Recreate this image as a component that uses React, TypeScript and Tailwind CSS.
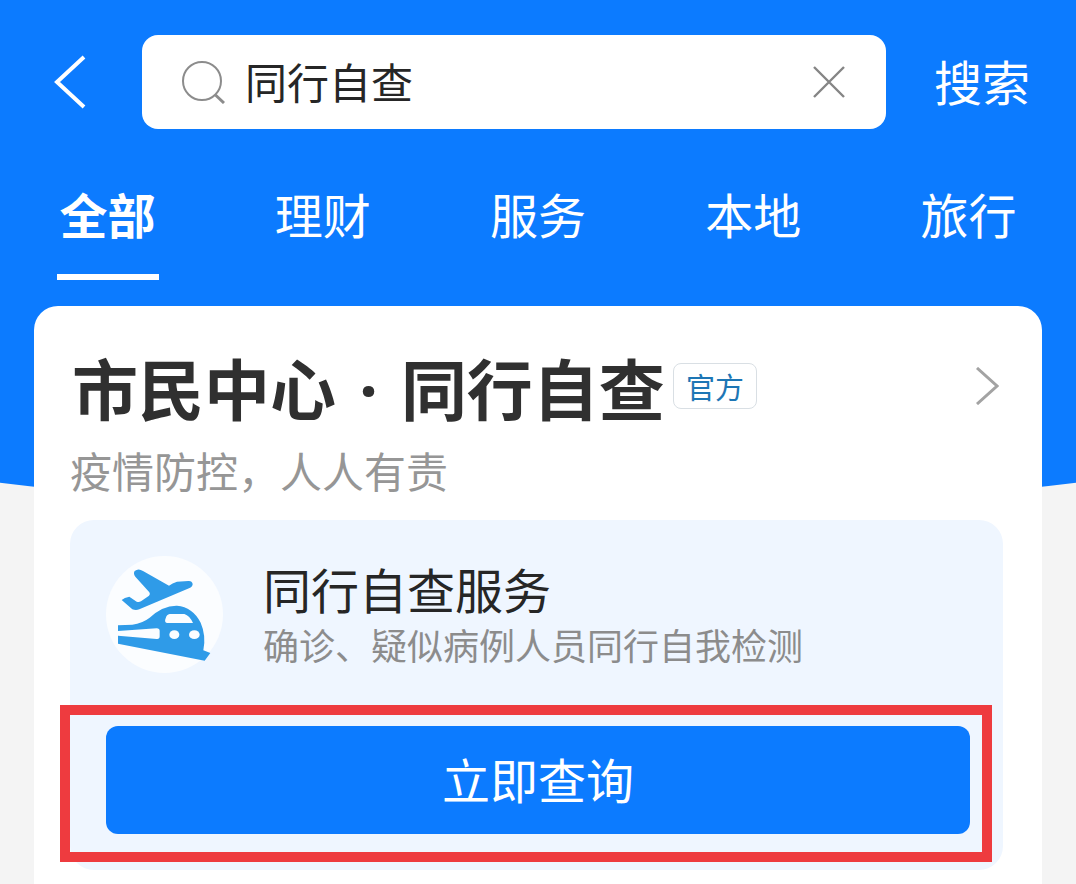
import React, { useState } from "react";

const tabs = ["全部", "理财", "服务", "本地", "旅行"];

const BackIcon = () => (
  <svg width="32" height="54" viewBox="0 0 32 54" fill="none" stroke="currentColor" strokeWidth="4">
    <path d="M30 2 L3 27 L30 52" />
  </svg>
);

const SearchIcon = () => (
  <svg width="44" height="44" viewBox="0 0 44 44" fill="none" stroke="#8c8c8c" strokeWidth="2">
    <circle cx="21" cy="21" r="19" />
    <path d="M34.5 35 L43 43" strokeWidth="3" />
  </svg>
);

const ClearIcon = () => (
  <svg width="32" height="32" viewBox="0 0 32 32" fill="none" stroke="#858585" strokeWidth="2.4">
    <path d="M1 1 L31 31 M31 1 L1 31" />
  </svg>
);

const ChevronIcon = () => (
  <svg width="24" height="38" viewBox="0 0 24 38" fill="none" stroke="#a3a3a3" strokeWidth="3">
    <path d="M2 1 L22 19 L2 37" />
  </svg>
);

const TravelIcon = () => (
  <svg className="size-full" viewBox="51 15 351 351" fill="#2f9be8">
    {/* Plane */}
    <path d="M311 99 Q309 89 298 90 L264 92 Q250 97 240 104 L162 60 Q148 51 137 60 Q132 68 139 77 L181 124 Q185 130 180 134 L156 151 Q149 155 143 152 L121 137 Q106 139 98 147 L130 175 Q141 179 151 175 L300 112 Q311 107 311 99 Z" />
    {/* Train */}
    <path d="M87 223 L130 221 Q160 217 182 200 Q222 163 264 164 Q311 168 335 215 Q352 254 343 298 L364 306 L347 329 L87 278 Z" />
    <g fill="#fbfdff">
      <path d="M87 240 L203 232 Q212 232 212 240 V256 Q212 265 203 264 L87 254 Z" />
      <path d="M242 189 H286 Q302 194 312 216 H234 Q225 214 230 202 Q233 190 242 189 Z" />
      <ellipse cx="256" cy="251" rx="15" ry="13" />
      <ellipse cx="316" cy="251" rx="16" ry="13" />
    </g>
  </svg>
);

const SearchHeader = () => {
  const [keyword, setKeyword] = useState("同行自查");

  return (
    <form
      className="flex items-center pt-[35px] pr-[46px] pl-[54px]"
      onSubmit={(e) => e.preventDefault()}
    >
      <button type="button" aria-label="返回" className="mr-14 shrink-0">
        <BackIcon />
      </button>
      <div className="flex h-[94px] min-w-0 flex-1 items-center rounded-2xl bg-white pr-[41px] pl-[39px]">
        <SearchIcon />
        <input
          type="text"
          aria-label="搜索内容"
          value={keyword}
          onChange={(e) => setKeyword(e.target.value)}
          className="ml-5 min-w-0 flex-1 pb-[2px] text-[42px] leading-[60px] text-[#262626] outline-none"
        />
        <button type="button" aria-label="清除" onClick={() => setKeyword("")}>
          <ClearIcon />
        </button>
      </div>
      <button type="submit" className="ml-12 shrink-0 pb-1 text-[48px] leading-[60px]">
        搜索
      </button>
    </form>
  );
};

const TabBar = () => {
  const [active, setActive] = useState("全部");

  return (
    <nav className="mt-[54px] grid grid-cols-5">
      {tabs.map((tab) => (
        <button
          key={tab}
          type="button"
          onClick={() => setActive(tab)}
          className="flex flex-col items-center text-[48px] leading-[60px]"
        >
          <span className={tab === active ? "font-bold" : ""}>{tab}</span>
          {tab === active && <span className="mt-[31px] h-[6px] w-[102px] bg-white" />}
        </button>
      ))}
    </nav>
  );
};

const ServicePanel = () => (
  <section className="mt-5 rounded-3xl bg-[#eff6ff] pt-9 pr-[33px] pb-9 pl-9">
    <div className="flex items-center">
      <div className="size-[117px] shrink-0 rounded-full bg-[#fbfdff]">
        <TravelIcon />
      </div>
      <div className="ml-10 pb-[2px]">
        <h2 className="text-[48px] leading-[60px] text-[#262626]">同行自查服务</h2>
        <p className="text-[36px] leading-[52px] text-[#8c8c8c]">
          确诊、疑似病例人员同行自我检测
        </p>
      </div>
    </div>
    <div className="relative mt-[53px]">
      <button
        type="button"
        className="h-[108px] w-full rounded-xl bg-[#0c7bff] pb-1 text-[48px] leading-[60px] text-white"
      >
        立即查询
      </button>
      {/* Red highlight around the button */}
      <div className="pointer-events-none absolute -top-[21px] -right-[22px] -bottom-7 -left-[46px] border-10 border-[#ee3b3f]" />
    </div>
  </section>
);

const ResultCard = () => (
  <main className="mx-[34px] mt-[26px] flex-1 rounded-t-3xl bg-white pt-10 pr-[39px] pl-9">
    <a href="#service" className="flex items-center pr-1">
      <h1 className="pl-[2px] text-[66px] leading-[80px] font-bold whitespace-nowrap text-[#303030]">
        市民中心
        <span className="px-[6px] font-['Noto_Sans',sans-serif] leading-none">{" · "}</span>
        同行自查
      </h1>
      <span className="ml-2 rounded-lg border border-[#d9dfe4] px-3 text-[29px] leading-[44px] whitespace-nowrap text-[#1d76b5]">
        官方
      </span>
      <span className="ml-auto">
        <ChevronIcon />
      </span>
    </a>
    <p className="mt-[14px] text-[42px] leading-[60px] text-[#969696]">
      疫情防控，人人有责
    </p>
    <ServicePanel />
  </main>
);

const App = () => {
  return (
    <div className="grid min-h-screen overflow-hidden bg-[#f4f4f4] font-['Noto_Sans_CJK_SC',sans-serif]">
      {/* Curved blue backdrop, stacked under the content */}
      <div className="col-start-1 row-start-1 -mx-[30%] h-[512px] rounded-b-[50%_133px] bg-[#0c7bff]" />
      <div className="z-10 col-start-1 row-start-1 flex min-w-0 flex-col">
        <header className="text-white">
          <SearchHeader />
          <TabBar />
        </header>
        <ResultCard />
      </div>
    </div>
  );
};

export default App;
